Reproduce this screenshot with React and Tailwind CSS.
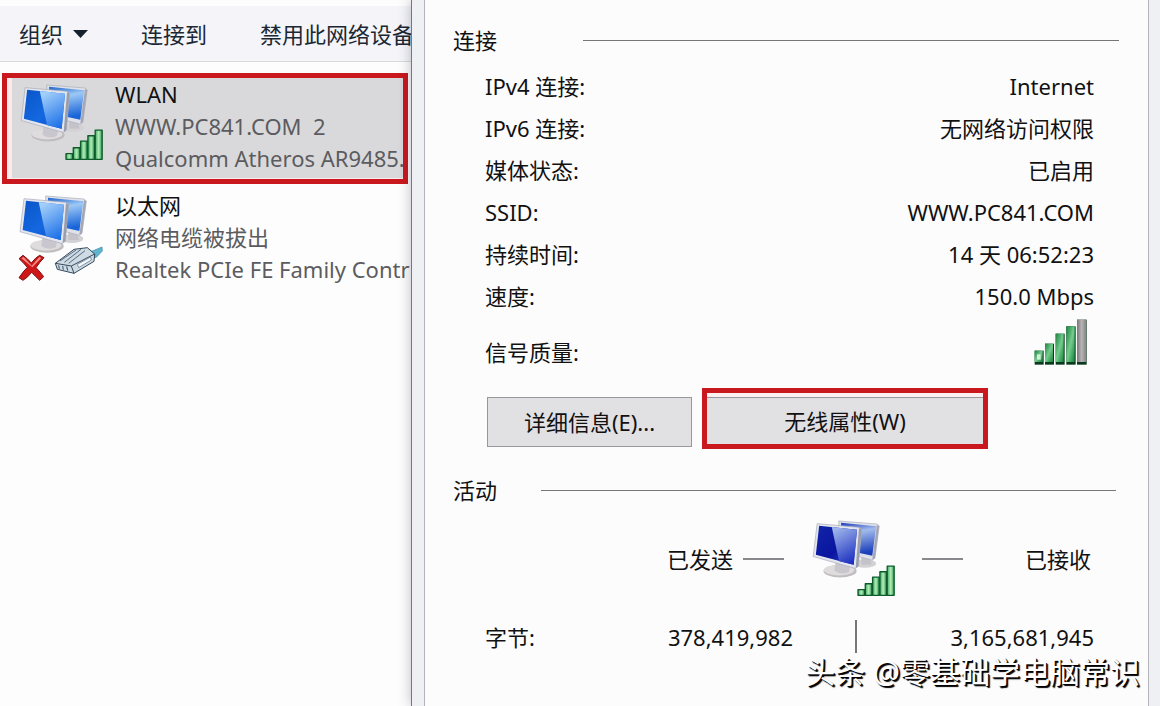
import React from "react";

const CONNECTION_ROWS = [
    { label: "IPv4 连接:", value: "Internet" },
    { label: "IPv6 连接:", value: "无网络访问权限" },
    { label: "媒体状态:", value: "已启用" },
    { label: "SSID:", value: "WWW.PC841.COM" },
    { label: "持续时间:", value: "14 天 06:52:23" },
    { label: "速度:", value: "150.0 Mbps" },
];

// Two overlapping monitors, shared by every adapter icon
function Monitors({ id, dark }) {
    return (
        <g>
            <defs>
                <linearGradient id={`${id}-front`} x1="0" y1="0" x2="1" y2="1">
                    <stop offset="0" stopColor={dark ? "#1226a8" : "#0a55c8"} />
                    <stop offset="0.55" stopColor={dark ? "#0a14a0" : "#1468e0"} />
                    <stop offset="1" stopColor={dark ? "#2a48cc" : "#0848c8"} />
                </linearGradient>
                <linearGradient id={`${id}-glare`} x1="0.3" y1="0" x2="0.7" y2="1">
                    <stop offset="0" stopColor={dark ? "#9db4ea" : "#a5d0fa"} />
                    <stop offset="1" stopColor={dark ? "#1c2ec0" : "#1c70e8"} />
                </linearGradient>
                <linearGradient id={`${id}-back`} x1="0" y1="0" x2="0.2" y2="1">
                    <stop offset="0" stopColor={dark ? "#1a3ab8" : "#1c62c8"} />
                    <stop offset="0.35" stopColor={dark ? "#a3bcec" : "#9cc8f6"} />
                    <stop offset="1" stopColor={dark ? "#1c40bc" : "#1864d8"} />
                </linearGradient>
            </defs>
            <ellipse cx="216" cy="176" rx="34" ry="13" fill="#d3d1d4" />
            <path d="M204 150 L232 158 L236 180 L206 180 Z" fill="#c4c3c9" />
            <path d="M137 48 L252 57 L259 63 L246 160 L238 166 L140 140 Z" fill="#dfe1ea" stroke="#a9acb8" strokeWidth="2" />
            <path d="M144 53 L250 64 L238 153 L144 132 Z" fill={`url(#${id}-back)`} />
            <path d="M252 60 L259 63 L246 160 L238 165 Z" fill="#a4a7b5" />
            <ellipse cx="141" cy="199" rx="50" ry="19" fill="#c0bdbf" />
            <ellipse cx="138" cy="196" rx="46" ry="16" fill="#dedcdd" />
            <path d="M128 168 L172 178 L168 201 C156 209 136 207 124 197 Z" fill="#c9c7cd" />
            <path d="M72 56 L196 67 L206 73 L196 184 L187 191 L60 155 Z" fill="#e3e6ef" stroke="#a6a9b6" strokeWidth="2" />
            <path d="M78 62 L192 74 L182 180 L68 150 Z" fill={`url(#${id}-front)`} />
            <path d="M116 66 L192 74 L182 180 L138 169 Z" fill={`url(#${id}-glare)`} />
            <path d="M198 70 L206 73 L196 184 L188 190 Z" fill="#999ead" />
        </g>
    );
}

function WifiAdapterIcon({ id, dark }) {
    return (
        <svg className="h-[78px] w-[85px] shrink-0" viewBox="57 45 255 235" aria-hidden="true">
            <Monitors id={id} dark={dark} />
            <defs>
                <linearGradient id={`${id}-bar`} x1="0" y1="0" x2="1" y2="0">
                    <stop offset="0" stopColor="#3fa862" />
                    <stop offset="0.5" stopColor="#b4edb9" />
                    <stop offset="1" stopColor="#2b9750" />
                </linearGradient>
            </defs>
            <g fill={`url(#${id}-bar)`} stroke="#0d5b2b" strokeWidth="4" strokeLinejoin="round">
                <rect x="195" y="255" width="20" height="17" />
                <rect x="217" y="237" width="20" height="35" />
                <rect x="239" y="217" width="20" height="55" />
                <rect x="261" y="201" width="20" height="71" />
                <rect x="283" y="184" width="21" height="88" />
            </g>
        </svg>
    );
}

function EthernetAdapterIcon() {
    return (
        <svg className="h-[87px] w-[87px] shrink-0" viewBox="54 45 261 261" aria-hidden="true">
            <Monitors id="eth" />
            {/* Cable plug */}
            <path d="M258 221 L306 201 L307 213 L290 231 L270 238 Z" fill="#5fb4cf" stroke="#3c88a6" strokeWidth="2" />
            <path d="M166 250 L222 208 L262 203 L284 222 L282 244 L222 280 L172 268 Z" fill="#cfdbe4" stroke="#34495c" strokeWidth="3" strokeLinejoin="round" />
            <path d="M166 250 L214 258 L284 222 M214 258 L222 280" fill="none" stroke="#34495c" strokeWidth="3" />
            <path d="M180 243 L228 210 M193 247 L243 208 M206 250 L255 212" fill="none" stroke="#56697b" strokeWidth="3" />
            <path d="M232 253 L272 231 L274 240 L236 263 Z" fill="#f0f6fa" stroke="#56697b" strokeWidth="2" />
            <path d="M176 256 L178 266 M188 258 L190 269 M200 259 L203 272" stroke="#34495c" strokeWidth="3" />
            {/* Disconnected mark */}
            <path
                d="M57 236 L69 226 Q83 236 94 249 Q107 232 119 226 L132 233 Q119 246 108 263 Q121 276 131 290 L119 301 Q107 290 95 277 Q84 292 69 301 L57 293 Q69 275 82 262 Q70 247 57 236 Z"
                fill="#cf1717"
                stroke="#7d1010"
                strokeWidth="3"
                strokeLinejoin="round"
            />
            <path d="M64 235 L71 231 L95 257 L118 231 L124 234 L97 262 Z" fill="#f28a86" />
        </svg>
    );
}

function SignalQualityIcon() {
    return (
        <svg className="mr-[6px] h-[46px] w-[54px] self-start" viewBox="103 56 162 138" role="img" aria-label="信号质量">
            <defs>
                <linearGradient id="quality" x1="0" y1="0" x2="1" y2="1">
                    <stop offset="0" stopColor="#1d8140" />
                    <stop offset="0.5" stopColor="#74cc8c" />
                    <stop offset="1" stopColor="#17813c" />
                </linearGradient>
                <linearGradient id="quality-off" x1="0" y1="0" x2="1" y2="0">
                    <stop offset="0" stopColor="#77767a" />
                    <stop offset="0.5" stopColor="#b9b5b5" />
                    <stop offset="1" stopColor="#858286" />
                </linearGradient>
            </defs>
            <g fill="#08391c">
                <rect x="105" y="151" width="27" height="42" />
                <rect x="136" y="130" width="27" height="63" />
                <rect x="168" y="100" width="27" height="93" />
                <rect x="200" y="78" width="28" height="115" />
                <rect x="232" y="58" width="29" height="135" />
            </g>
            <g fill="url(#quality)">
                <rect x="105" y="151" width="24" height="34" />
                <rect x="136" y="130" width="24" height="55" />
                <rect x="168" y="100" width="24" height="85" />
                <rect x="200" y="78" width="25" height="107" />
            </g>
            <rect x="112" y="162" width="11" height="16" fill="#d2f0d8" />
            <rect x="232" y="58" width="28" height="127" fill="url(#quality-off)" />
        </svg>
    );
}

function AdapterText({ name, status, device }) {
    return (
        <span className="flex flex-col text-left leading-8 whitespace-nowrap text-[#5c5c60]">
            <span className="text-[#111]">{name}</span>
            <span className="whitespace-pre">{status}</span>
            <span>{device}</span>
        </span>
    );
}

function SectionTitle({ title, gap }) {
    return (
        <div className={`flex items-center ${gap}`}>
            <h2 className="shrink-0 leading-8">{title}</h2>
            <div className="h-px flex-1 bg-[#77757a]" />
        </div>
    );
}

function ConnectionsWindow() {
    return (
        <section className="w-[411px] shrink-0 overflow-hidden bg-[#fdfdfe] pt-[6px]">
            <nav className="flex h-14 items-center gap-[53px] border-b border-[#d9dade] bg-[#f4f4f9] pl-[19px] whitespace-nowrap text-[#1b2733]">
                <button type="button" className="flex items-center gap-[10px]">
                    组织
                    <svg className="h-2 w-[15px]" viewBox="0 0 15 8" aria-hidden="true">
                        <path d="M0 0 H15 L7.5 8 Z" fill="#14202e" />
                    </svg>
                </button>
                <button type="button">连接到</button>
                <button type="button">禁用此网络设备</button>
            </nav>

            {/* Selected adapter, outlined in red */}
            <div className="mt-[11px] ml-[2px] flex h-[111px] w-[406px] border-[5px] border-[#c9181e] bg-[#fbeaec] pb-px pl-[5px]">
                <button type="button" className="flex w-full min-w-0 items-start gap-[10px] bg-[#d9d9db] pl-2">
                    <span className="mt-[6px] flex">
                        <WifiAdapterIcon id="wlan" />
                    </span>
                    <AdapterText name="WLAN" status="WWW.PC841.COM  2" device="Qualcomm Atheros AR9485." />
                </button>
            </div>

            <button type="button" className="mt-[5px] flex items-start gap-[10px] pl-[18px]">
                <span className="mt-[6px] flex">
                    <EthernetAdapterIcon />
                </span>
                <AdapterText name="以太网" status="网络电缆被拔出" device="Realtek PCIe FE Family Contr" />
            </button>
        </section>
    );
}

function StatusDialog() {
    return (
        <section className="z-10 flex min-w-0 flex-1 border-l border-[#77777b] bg-[#eff0f3] pr-[11px] pl-3 shadow-[0_0_12px_rgba(40,40,60,0.3)]">
            <div className="min-w-0 flex-1 border-x border-[#b4b5bb] bg-[#fcfcfd] pt-6 pl-7">
                <div className="pr-[29px]">
                    <SectionTitle title="连接" gap="gap-[86px]" />
                </div>

                <dl className="mt-[9px] pr-[54px] pl-8 leading-[42px]">
                    {CONNECTION_ROWS.map((row) => (
                        <div key={row.label} className="flex justify-between">
                            <dt>{row.label}</dt>
                            <dd>{row.value}</dd>
                        </div>
                    ))}
                    <div className="flex h-14 items-end justify-between">
                        <dt>信号质量:</dt>
                        <dd className="flex self-start pt-[2px]">
                            <SignalQualityIcon />
                        </dd>
                    </div>
                </dl>

                <div className="mt-[15px] flex items-start gap-[10px] pl-[34px]">
                    <button type="button" className="mt-[9px] h-[50px] w-[205px] border border-[#99979c] bg-[#e1e0e3]">
                        详细信息(E)...
                    </button>
                    <div className="flex h-[61px] w-[286px] border-[5px] border-[#c9181e] bg-[#fdf0f1] pt-1">
                        <button type="button" className="w-full border-t border-[#99979c] bg-[#e1e0e3]">
                            无线属性(W)
                        </button>
                    </div>
                </div>

                <div className="mt-[25px] pr-8">
                    <SectionTitle title="活动" gap="gap-[44px]" />
                </div>

                <div className="mt-[14px] flex items-center justify-end pr-[57px]">
                    <span>已发送</span>
                    <span className="ml-[10px] h-[2px] w-[41px] bg-[#8a888d]" />
                    <span className="mr-[25px] ml-7 flex">
                        <WifiAdapterIcon id="activity" dark />
                    </span>
                    <span className="h-[2px] w-[41px] bg-[#8a888d]" />
                    <span className="ml-[62px]">已接收</span>
                </div>

                <div className="mt-[22px] flex items-center pr-[54px] pl-8">
                    <span className="flex-1">字节:</span>
                    <span>378,419,982</span>
                    <span className="ml-[62px] h-[33px] w-[2px] bg-[#77757a]" />
                    <span className="w-[237px] text-right">3,165,681,945</span>
                </div>
            </div>
        </section>
    );
}

export default function App() {
    return (
        <main className="relative flex min-h-screen overflow-hidden bg-[#fdfdfe] font-['Noto_Sans','Noto_Sans_CJK_SC',sans-serif] text-[22px] leading-8 text-[#111]">
            <ConnectionsWindow />
            <StatusDialog />
            <p className="absolute right-5 bottom-4 z-20 text-[30px] leading-9 whitespace-nowrap text-white [text-shadow:2px_2px_1px_#000,1px_1px_0_#000]">
                头条 @零基础学电脑常识
            </p>
        </main>
    );
}
